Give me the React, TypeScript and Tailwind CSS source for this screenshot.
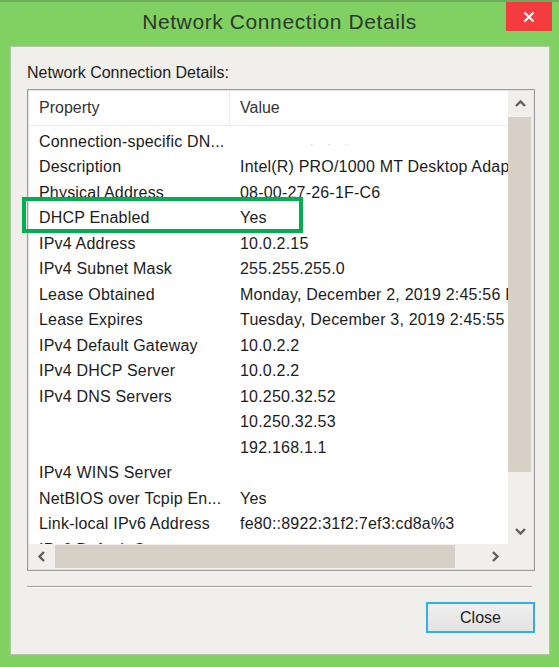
import type { ReactNode } from 'react';

const details: [string, string][] = [
  ['Connection-specific DN...', ''],
  ['Description', 'Intel(R) PRO/1000 MT Desktop Adapter'],
  ['Physical Address', '08-00-27-26-1F-C6'],
  ['DHCP Enabled', 'Yes'],
  ['IPv4 Address', '10.0.2.15'],
  ['IPv4 Subnet Mask', '255.255.255.0'],
  ['Lease Obtained', 'Monday, December 2, 2019 2:45:56 PM'],
  ['Lease Expires', 'Tuesday, December 3, 2019 2:45:55 PM'],
  ['IPv4 Default Gateway', '10.0.2.2'],
  ['IPv4 DHCP Server', '10.0.2.2'],
  ['IPv4 DNS Servers', '10.250.32.52'],
  ['', '10.250.32.53'],
  ['', '192.168.1.1'],
  ['IPv4 WINS Server', ''],
  ['NetBIOS over Tcpip En...', 'Yes'],
  ['Link-local IPv6 Address', 'fe80::8922:31f2:7ef3:cd8a%3'],
  ['IPv6 Default Gateway', ''],
];

const Chevron = ({ dir }: { dir: 'up' | 'down' | 'left' | 'right' }) => {
  const points = {
    up: '1,7 5.5,2.5 10,7',
    down: '1,3 5.5,7.5 10,3',
    left: '7,1 2.5,5.5 7,10',
    right: '3,1 7.5,5.5 3,10',
  }[dir];
  return (
    <svg width="11" height="11" viewBox="0 0 11 11">
      <polyline points={points} fill="none" stroke="#5f5f5f" strokeWidth="2.4" />
    </svg>
  );
};

const ArrowCell = ({ className, children }: { className: string; children: ReactNode }) => (
  <div className={`flex items-center justify-center ${className}`}>{children}</div>
);

const App = () => {
  return (
    <div className="relative w-[559px] h-[667px] overflow-hidden bg-[#80d062] font-['Liberation_Sans',Arial,sans-serif] text-[#1c1c1c]">
      <div className="h-[2px] bg-[#71aa5c]" />

      {/* title bar */}
      <div className="relative h-[44px] flex justify-center">
        <div className="mt-[8px] text-[21px] leading-[24px] tracking-[0.6px] text-[#2c392c]">
          Network Connection Details
        </div>
        <button className="absolute right-[7px] top-0 w-[46px] h-[29px] bg-[#f43b3e] flex items-center justify-center">
          <svg width="12" height="12" viewBox="0 0 12 12">
            <path d="M1.5 1.5 L10.5 10.5 M10.5 1.5 L1.5 10.5" stroke="#ffffff" strokeWidth="2.2" />
          </svg>
        </button>
      </div>

      {/* client area */}
      <div className="ml-[10px] w-[540px] h-[609px] bg-[#f0efeb] border border-[#b2c7a6] flex flex-col">
        <div className="mt-[17px] pl-[16px] text-[16px] leading-[18px]">Network Connection Details:</div>

        <div className="mt-[7px] ml-[16px] w-[508px] h-[482px] border border-[#9c9c9c]">
          <div className="h-full border border-[#e2e2e2] flex flex-col">
            <div className="flex h-[453px]">
              <div className="flex-1 bg-white overflow-hidden">
                <div className="flex h-[35px] border-b border-[#e5edf6] text-[16px] text-[#333]">
                  <div className="w-[201px] pl-[10px] flex items-center border-r border-[#e8ecf2]">Property</div>
                  <div className="flex-1 pl-[10px] flex items-center">Value</div>
                </div>
                <div className="pt-[3px]">
                  {details.map(([prop, value], i) => (
                    <div
                      key={i}
                      className="flex h-[25.5px] items-center text-[16px] tracking-[0.2px] whitespace-nowrap"
                    >
                      <div className="w-[201px] pl-[10px] shrink-0">{prop}</div>
                      <div className="pl-[10px]">
                        {i === 0 ? (
                          <span className="pl-[70px] text-[9px] tracking-[6px] text-[#d4d4d4]">- - ·</span>
                        ) : (
                          value
                        )}
                      </div>
                    </div>
                  ))}
                </div>
              </div>

              {/* vertical scrollbar */}
              <div className="w-[25px] flex flex-col bg-[#f0efeb]">
                <ArrowCell className="h-[26px] pr-[1px]">
                  <Chevron dir="up" />
                </ArrowCell>
                <div className="h-[355px] mr-[2px] bg-[#d6d0c6]" />
                <div className="flex-1" />
                <ArrowCell className="h-[26px] pr-[1px]">
                  <Chevron dir="down" />
                </ArrowCell>
              </div>
            </div>

            {/* horizontal scrollbar */}
            <div className="flex flex-1 bg-[#f0efeb]">
              <ArrowCell className="w-[26px]">
                <Chevron dir="left" />
              </ArrowCell>
              <div className="w-[400px] my-[1px] bg-[#d6d0c6]" />
              <div className="flex-1" />
              <ArrowCell className="w-[26px]">
                <Chevron dir="right" />
              </ArrowCell>
              <div className="w-[25px]" />
            </div>
          </div>
        </div>

        <div className="mt-[15px] ml-[16px] w-[505px] h-[2px] border-t border-[#a3a09a] border-b border-b-white" />

        <div className="mt-[14px] mr-[14px] flex justify-end">
          <button className="w-[109px] h-[31px] border-2 border-[#33adf2] bg-gradient-to-b from-[#efefef] to-[#e3e3e3] text-[16px] text-[#1c1c1c]">
            Close
          </button>
        </div>
      </div>

      {/* highlight around the DHCP row */}
      <div className="absolute left-[22px] top-[197px] w-[281px] h-[36px] border-4 border-[#00b050]" />
    </div>
  );
};

export default App;
